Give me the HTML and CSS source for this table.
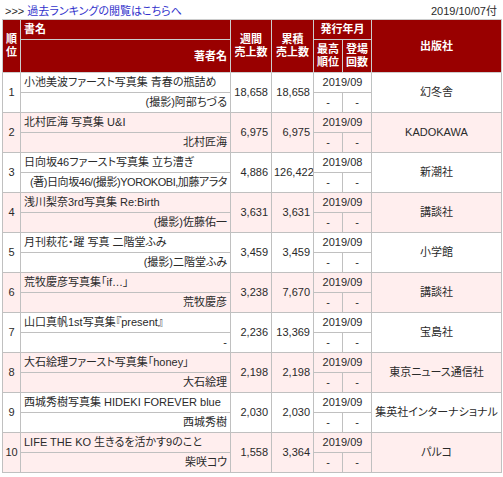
FILE: index.html
```html
<!DOCTYPE html>
<html lang="ja">
<head>
<meta charset="utf-8">
<link rel="stylesheet" href="styles.css">
</head>
<body>
<div class="topbar">
  <div class="past"><span class="arrows">&gt;&gt;&gt;</span> <a href="#" class="link">過去ランキングの閲覧はこちらへ</a></div>
  <div class="date">2019/10/07付</div>
</div>
<table class="rank">
  <colgroup>
    <col class="c-rank"><col class="c-title"><col class="c-week"><col class="c-total"><col class="c-best"><col class="c-count"><col class="c-pub">
  </colgroup>
  <thead>
    <tr class="h1">
      <th rowspan="2" class="center">順<br>位</th>
      <th class="left">書名</th>
      <th rowspan="2" class="center">週間<br>売上数</th>
      <th rowspan="2" class="center">累積<br>売上数</th>
      <th colspan="2" class="center">発行年月</th>
      <th rowspan="2" class="center">出版社</th>
    </tr>
    <tr class="h2">
      <th class="right">著者名</th>
      <th class="center">最高<br>順位</th>
      <th class="center">登場<br>回数</th>
    </tr>
  </thead>
  <tbody>
    <tr class="odd"><td rowspan="2" class="center">1</td><td class="left">小池美波ファースト写真集 青春の瓶詰め</td><td rowspan="2" class="right">18,658</td><td rowspan="2" class="right">18,658</td><td colspan="2" class="center">2019/09</td><td rowspan="2" class="center">幻冬舎</td></tr>
    <tr class="odd"><td class="right">(撮影)阿部ちづる</td><td class="center">-</td><td class="center">-</td></tr>

    <tr class="even"><td rowspan="2" class="center">2</td><td class="left">北村匠海 写真集 U&amp;I</td><td rowspan="2" class="right">6,975</td><td rowspan="2" class="right">6,975</td><td colspan="2" class="center">2019/09</td><td rowspan="2" class="center">KADOKAWA</td></tr>
    <tr class="even"><td class="right">北村匠海</td><td class="center">-</td><td class="center">-</td></tr>

    <tr class="odd"><td rowspan="2" class="center">3</td><td class="left">日向坂46ファースト写真集 立ち漕ぎ</td><td rowspan="2" class="right">4,886</td><td rowspan="2" class="right">126,422</td><td colspan="2" class="center">2019/08</td><td rowspan="2" class="center">新潮社</td></tr>
    <tr class="odd"><td class="right tight">(著)日向坂46/(撮影)YOROKOBI,加藤アラタ</td><td class="center">-</td><td class="center">-</td></tr>

    <tr class="even"><td rowspan="2" class="center">4</td><td class="left">浅川梨奈3rd写真集 Re:Birth</td><td rowspan="2" class="right">3,631</td><td rowspan="2" class="right">3,631</td><td colspan="2" class="center">2019/09</td><td rowspan="2" class="center">講談社</td></tr>
    <tr class="even"><td class="right">(撮影)佐藤佑一</td><td class="center">-</td><td class="center">-</td></tr>

    <tr class="odd"><td rowspan="2" class="center">5</td><td class="left">月刊萩花・躍 写真 二階堂ふみ</td><td rowspan="2" class="right">3,459</td><td rowspan="2" class="right">3,459</td><td colspan="2" class="center">2019/09</td><td rowspan="2" class="center">小学館</td></tr>
    <tr class="odd"><td class="right">(撮影)二階堂ふみ</td><td class="center">-</td><td class="center">-</td></tr>

    <tr class="even"><td rowspan="2" class="center">6</td><td class="left">荒牧慶彦写真集「if…」</td><td rowspan="2" class="right">3,238</td><td rowspan="2" class="right">7,670</td><td colspan="2" class="center">2019/09</td><td rowspan="2" class="center">講談社</td></tr>
    <tr class="even"><td class="right">荒牧慶彦</td><td class="center">-</td><td class="center">-</td></tr>

    <tr class="odd"><td rowspan="2" class="center">7</td><td class="left">山口真帆1st写真集『present』</td><td rowspan="2" class="right">2,236</td><td rowspan="2" class="right">13,369</td><td colspan="2" class="center">2019/09</td><td rowspan="2" class="center">宝島社</td></tr>
    <tr class="odd"><td class="right">-</td><td class="center">-</td><td class="center">-</td></tr>

    <tr class="even"><td rowspan="2" class="center">8</td><td class="left">大石絵理ファースト写真集「honey」</td><td rowspan="2" class="right">2,198</td><td rowspan="2" class="right">2,198</td><td colspan="2" class="center">2019/09</td><td rowspan="2" class="center">東京ニュース通信社</td></tr>
    <tr class="even"><td class="right">大石絵理</td><td class="center">-</td><td class="center">-</td></tr>

    <tr class="odd"><td rowspan="2" class="center">9</td><td class="left">西城秀樹写真集 HIDEKI FOREVER blue</td><td rowspan="2" class="right">2,030</td><td rowspan="2" class="right">2,030</td><td colspan="2" class="center">2019/09</td><td rowspan="2" class="center">集英社インターナショナル</td></tr>
    <tr class="odd"><td class="right">西城秀樹</td><td class="center">-</td><td class="center">-</td></tr>

    <tr class="even"><td rowspan="2" class="center">10</td><td class="left">LIFE THE KO 生きるを活かす9のこと</td><td rowspan="2" class="right">1,558</td><td rowspan="2" class="right">3,364</td><td colspan="2" class="center">2019/09</td><td rowspan="2" class="center">パルコ</td></tr>
    <tr class="even"><td class="right">柴咲コウ</td><td class="center">-</td><td class="center">-</td></tr>
  </tbody>
</table>
</body>
</html>
```
FILE: styles.css
```css
html, body {
  margin: 0;
  padding: 0;
  background: #ffffff;
}
body {
  font-family: "Liberation Sans", "Noto Sans CJK JP", sans-serif;
  font-size: 11px;
  color: #2a2a2a;
  font-feature-settings: "palt";
}
.topbar {
  display: flex;
  justify-content: space-between;
  align-items: center;
  height: 19px;
  padding: 0 6px 0 5px;
}
.arrows {
  color: #2a2a2a;
}
.link {
  color: #3333cc;
  text-decoration: none;
}
.rank {
  margin-left: 2px;
  width: 500px;
  table-layout: fixed;
  border-collapse: collapse;
  border: 1px solid #c0c0c0;
}
.c-rank { width: 18px; }
.c-title { width: 210px; }
.c-week { width: 41px; }
.c-total { width: 42px; }
.c-best { width: 29px; }
.c-count { width: 29px; }
.c-pub { width: 130px; }
.rank th, .rank td {
  border: 1px solid #c0c0c0;
  padding: 0 3px;
  line-height: 13px;
  white-space: nowrap;
  overflow: hidden;
}
.rank th {
  background: #990000;
  color: #ffffff;
  font-weight: bold;
  border-color: #cccccc;
}
.rank tr.h1 { height: 20px; }
.rank tr.h2 { height: 33px; }
.rank tbody tr { height: 20px; }
.rank tr.odd td { background: #ffffff; }
.rank tr.even td { background: #ffeeee; }
.left { text-align: left; }
.right { text-align: right; }
.center { text-align: center; }
.rank th.center[rowspan], .rank td[rowspan] { padding: 0 2px; }
.rank td.right[rowspan] { padding-right: 3px; }
.rank td.tight {
  padding-left: 1px;
  letter-spacing: -0.45px;
}
```
